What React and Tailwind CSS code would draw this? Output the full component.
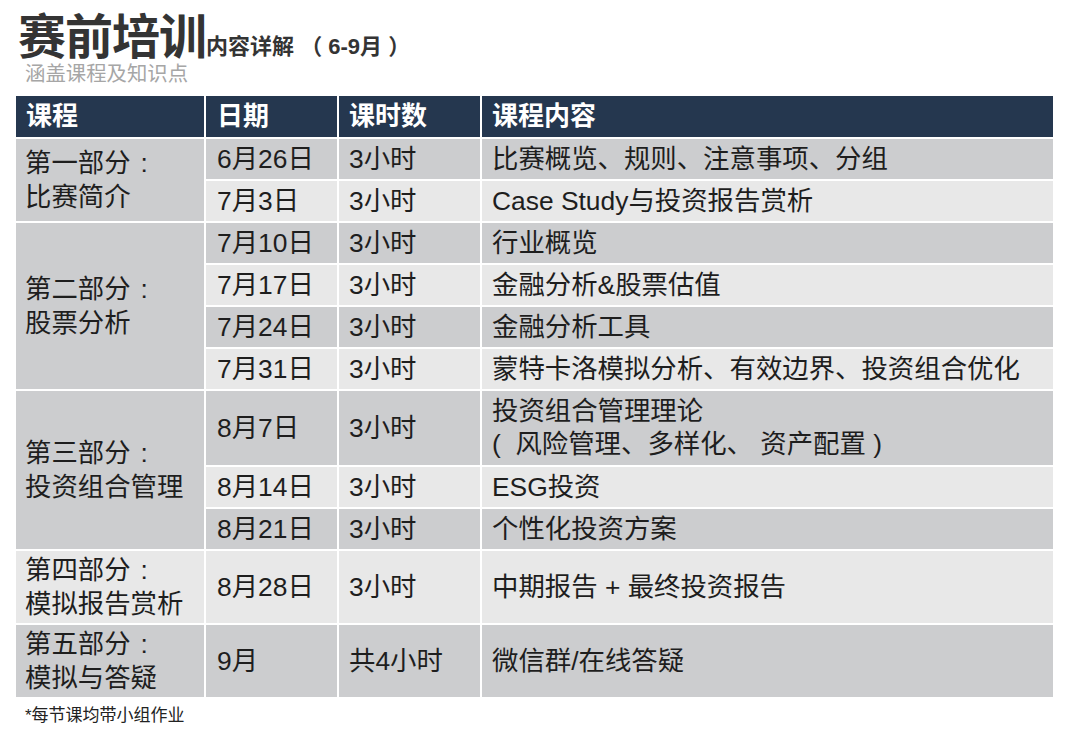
import React from "react";

const font = { fontFamily: '"Liberation Sans", "Noto Sans CJK SC", sans-serif' };

const dark = "bg-[#cccdcf]";
const light = "bg-[#e8e8e8]";

// date, hours, content, row background
const rows = [
  ["6月26日", "3小时", ["比赛概览、规则、注意事项、分组"], dark],
  ["7月3日", "3小时", ["Case Study与投资报告赏析"], light],
  ["7月10日", "3小时", ["行业概览"], dark],
  ["7月17日", "3小时", ["金融分析&股票估值"], light],
  ["7月24日", "3小时", ["金融分析工具"], dark],
  ["7月31日", "3小时", ["蒙特卡洛模拟分析、有效边界、投资组合优化"], light],
  ["8月7日", "3小时", ["投资组合管理理论", "(  风险管理、多样化、 资产配置 )"], dark],
  ["8月14日", "3小时", ["ESG投资"], light],
  ["8月21日", "3小时", ["个性化投资方案"], dark],
  ["8月28日", "3小时", ["中期报告 + 最终投资报告"], light],
  ["9月", "共4小时", ["微信群/在线答疑"], dark],
];

// section label cells in first column
const sections = [
  { lines: ["第一部分", "比赛简介"], row: "row-start-2 row-span-2", bg: dark },
  { lines: ["第二部分", "股票分析"], row: "row-start-4 row-span-4", bg: dark },
  { lines: ["第三部分", "投资组合管理"], row: "row-start-8 row-span-3", bg: dark },
  { lines: ["第四部分", "模拟报告赏析"], row: "row-start-11 row-span-1", bg: light },
  { lines: ["第五部分", "模拟与答疑"], row: "row-start-12 row-span-1", bg: dark },
];

const rowStarts = [
  "row-start-2",
  "row-start-3",
  "row-start-4",
  "row-start-5",
  "row-start-6",
  "row-start-7",
  "row-start-8",
  "row-start-9",
  "row-start-10",
  "row-start-11",
  "row-start-12",
];

function Cell({ className, children }) {
  return (
    <div className={`flex flex-col justify-center text-[26.4px] leading-[33px] text-[#1e1e1e] ${className}`}>
      {children}
    </div>
  );
}

export default function App() {
  return (
    <div className="w-[1080px] h-[734px] bg-white overflow-hidden px-[16px]" style={font}>
      {/* Title */}
      <div className="h-[62px] flex items-end pl-[2px] text-[#343434]">
        <span className="text-[48px] leading-none font-bold tracking-[-1px]">赛前培训</span>
        <span className="text-[22px] leading-none font-bold pb-[4px] whitespace-pre">内容详解 （ 6-9月 ）</span>
      </div>
      <div className="pl-[9px] text-[20.4px] leading-[24px] text-[#a6a6a6]">涵盖课程及知识点</div>

      {/* Table */}
      <div className="mt-[10px] grid grid-cols-[188px_131px_141px_571px] grid-rows-[41px_40px_40px_40px_40px_40px_40px_74px_40px_40px_72px_72px] gap-[2px]">
        {["课程", "日期", "课时数", "课程内容"].map((h, i) => (
          <div
            key={h}
            className={`bg-[#25374f] text-white text-[26px] font-bold flex items-center ${i === 1 ? "pl-[11px]" : "pl-[10px]"}`}
          >
            {h}
          </div>
        ))}

        {sections.map((s) => (
          <Cell key={s.lines[0]} className={`col-start-1 ${s.row} ${s.bg} pl-[9px] leading-[34px]`}>
            <span>
              {s.lines[0]}
              <span className="ml-[10px]">:</span>
            </span>
            <span>{s.lines[1]}</span>
          </Cell>
        ))}

        {rows.map(([date, hours, content, bg], i) => (
          <React.Fragment key={date}>
            <Cell className={`col-start-2 ${rowStarts[i]} ${bg} pl-[11px]`}>{date}</Cell>
            <Cell className={`col-start-3 ${rowStarts[i]} ${bg} pl-[10px]`}>{hours}</Cell>
            <Cell className={`col-start-4 ${rowStarts[i]} ${bg} pl-[10px]`}>
              {content.map((c) => (
                <span key={c} className="whitespace-pre">{c}</span>
              ))}
            </Cell>
          </React.Fragment>
        ))}
      </div>

      <div className="mt-[9px] pl-[9px] text-[17px] leading-[20px] text-[#222]">*每节课均带小组作业</div>
    </div>
  );
}
